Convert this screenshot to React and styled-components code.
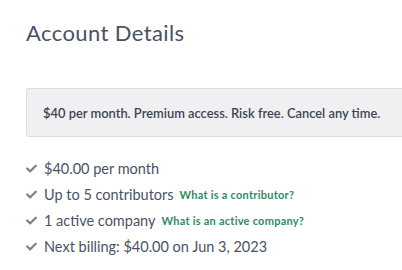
import React from 'react';
import styled, { createGlobalStyle } from 'styled-components';

const GlobalStyle = createGlobalStyle`
    html, body {
        margin: 0;
        padding: 0;
        background: #ffffff;
        overflow: hidden;
    }
    body {
        font-family: Lato, "Noto Sans", sans-serif;
    }
`;

const Page = styled.div`
    width: 402px;
    height: 270px;
    padding: 18px 0 0 26px;
    box-sizing: border-box;
`;

const Title = styled.h1`
    margin: 0;
    font-size: 22px;
    font-weight: 400;
    line-height: 30px;
    color: #4b5263;
    letter-spacing: 0.4px;
`;

const Banner = styled.div`
    margin-top: 40px;
    height: 49px;
    box-sizing: border-box;
    display: flex;
    align-items: center;
    padding: 0 16px;
    background: #f0f0f3;
    border: 1px solid #dcdde1;
    border-right: none;
    border-radius: 3px 0 0 3px;
    font-size: 12.9px;
    font-weight: 600;
    color: #3e4552;
    white-space: nowrap;
`;

const List = styled.ul`
    list-style: none;
    margin: 18px 0 0;
    padding: 0;
    display: flex;
    flex-direction: column;
`;

const Item = styled.li`
    display: flex;
    align-items: center;
    height: 26px;
    font-size: 14.5px;
    color: #4b5263;
`;

const Check = styled.svg`
    width: 11px;
    height: 9px;
    margin-right: 7px;
    flex-shrink: 0;
    fill: #7b8089;
`;

const Link = styled.a`
    margin-left: 6px;
    font-size: 11px;
    font-weight: 700;
    color: #2f8b64;
    text-decoration: none;
    letter-spacing: 0.25px;
`;

function CheckIcon() {
    return (
        <Check viewBox="0 0 512 400">
            <path d="M173.9 389.4L7.5 223c-10-10-10-26.2 0-36.2l36.2-36.2c10-10 26.2-10 36.2 0L192 262.7 432.1 22.5c10-10 26.2-10 36.2 0l36.2 36.2c10 10 10 26.2 0 36.2L210.1 389.4c-10 10-26.2 10-36.2 0z" />
        </Check>
    );
}

const items = [
    { text: '$40.00 per month' },
    { text: 'Up to 5 contributors', link: 'What is a contributor?' },
    { text: '1 active company', link: 'What is an active company?' },
    { text: 'Next billing: $40.00 on Jun 3, 2023' },
];

function App() {
    return (
        <>
            <GlobalStyle />
            <Page>
                <Title>Account Details</Title>
                <Banner>$40 per month. Premium access. Risk free. Cancel any time.</Banner>
                <List>
                    {items.map(item => (
                        <Item key={item.text}>
                            <CheckIcon />
                            {item.text}
                            {item.link && <Link href="#">{item.link}</Link>}
                        </Item>
                    ))}
                </List>
            </Page>
        </>
    );
}

export default App;
